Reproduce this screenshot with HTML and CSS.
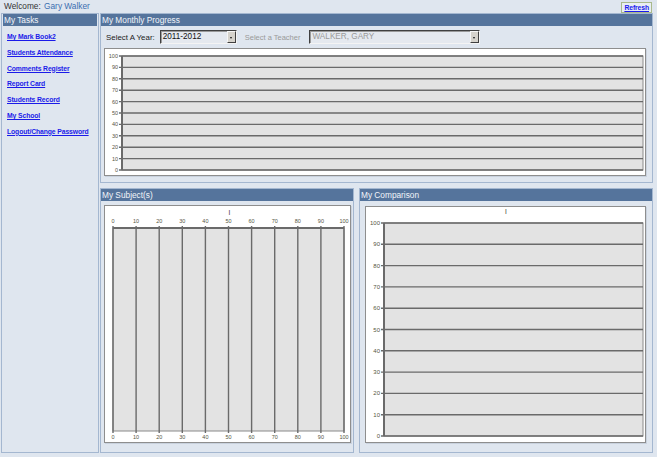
FILE: index.html
```html
<!DOCTYPE html>
<html>
<head>
<meta charset="utf-8">
<title>Dashboard</title>
<link rel="stylesheet" href="styles.css">
</head>
<body>
<div class="page">
  <div class="topbar">
    <div class="welcome">Welcome: <span class="user">Gary Walker</span></div>
    <a class="refresh" href="#">Refresh</a>
  </div>
  <div class="main">
    <div class="panel tasks">
      <div class="phead">My Tasks</div>
      <ul class="links">
        <li><a href="#">My Mark Book2</a></li>
        <li><a href="#">Students Attendance</a></li>
        <li><a href="#">Comments Register</a></li>
        <li><a href="#">Report Card</a></li>
        <li><a href="#">Students Record</a></li>
        <li><a href="#">My School</a></li>
        <li><a href="#">Logout/Change Password</a></li>
      </ul>
    </div>
    <div class="right">
      <div class="panel monthly">
        <div class="phead">My Monthly Progress</div>
        <div class="controls">
          <span class="lbl">Select A Year:</span>
          <div class="select year"><span class="val">2011-2012</span><span class="arrow"></span></div>
          <span class="lbl dim">Select a Teacher</span>
          <div class="select teacher"><span class="val">WALKER, GARY</span><span class="arrow"></span></div>
        </div>
        <div class="chartbox">
          <svg width="540" height="126" viewBox="0 0 540 126">
            <rect x="17" y="7" width="521" height="114" fill="#e3e3e3" stroke="#8a8a8a" stroke-width="1"/>
            <g stroke="#6a6a6a" stroke-width="1.4">
              <line x1="14" y1="7" x2="538" y2="7"/>
              <line x1="14" y1="18.4" x2="538" y2="18.4"/>
              <line x1="14" y1="29.8" x2="538" y2="29.8"/>
              <line x1="14" y1="41.2" x2="538" y2="41.2"/>
              <line x1="14" y1="52.6" x2="538" y2="52.6"/>
              <line x1="14" y1="64" x2="538" y2="64"/>
              <line x1="14" y1="75.4" x2="538" y2="75.4"/>
              <line x1="14" y1="86.8" x2="538" y2="86.8"/>
              <line x1="14" y1="98.2" x2="538" y2="98.2"/>
              <line x1="14" y1="109.6" x2="538" y2="109.6"/>
              <line x1="14" y1="121" x2="538" y2="121"/>
              <line x1="17" y1="7" x2="17" y2="121" stroke-width="2"/>
            </g>
            <g class="axis" text-anchor="end">
              <text x="13" y="9">100</text>
              <text x="13" y="20.4">90</text>
              <text x="13" y="31.8">80</text>
              <text x="13" y="43.2">70</text>
              <text x="13" y="54.6">60</text>
              <text x="13" y="66">50</text>
              <text x="13" y="77.4">40</text>
              <text x="13" y="88.8">30</text>
              <text x="13" y="100.2">20</text>
              <text x="13" y="111.6">10</text>
              <text x="13" y="123">0</text>
            </g>
          </svg>
        </div>
      </div>
      <div class="bottomrow">
        <div class="panel subject">
          <div class="phead">My Subject(s)</div>
          <div class="chartbox">
            <svg width="245" height="236" viewBox="0 0 245 236">
              <rect x="8" y="22" width="231" height="203" fill="#e3e3e3" stroke="#8a8a8a" stroke-width="1"/>
              <text class="axis tick" x="124.5" y="9" text-anchor="middle">I</text>
              <g stroke="#6a6a6a" stroke-width="1.4">
                <line x1="8" y1="20" x2="8" y2="227"/>
                <line x1="31.1" y1="20" x2="31.1" y2="227"/>
                <line x1="54.2" y1="20" x2="54.2" y2="227"/>
                <line x1="77.3" y1="20" x2="77.3" y2="227"/>
                <line x1="100.4" y1="20" x2="100.4" y2="227"/>
                <line x1="123.5" y1="20" x2="123.5" y2="227"/>
                <line x1="146.6" y1="20" x2="146.6" y2="227"/>
                <line x1="169.7" y1="20" x2="169.7" y2="227"/>
                <line x1="192.8" y1="20" x2="192.8" y2="227"/>
                <line x1="215.9" y1="20" x2="215.9" y2="227"/>
                <line x1="239" y1="20" x2="239" y2="227"/>
                <line x1="8" y1="22" x2="239" y2="22" stroke-width="2"/>
              </g>
              <g class="axis" text-anchor="middle">
                <text x="8" y="17">0</text><text x="31.1" y="17">10</text><text x="54.2" y="17">20</text>
                <text x="77.3" y="17">30</text><text x="100.4" y="17">40</text><text x="123.5" y="17">50</text>
                <text x="146.6" y="17">60</text><text x="169.7" y="17">70</text><text x="192.8" y="17">80</text>
                <text x="215.9" y="17">90</text><text x="239" y="17">100</text>
              </g>
              <g class="axis" text-anchor="middle">
                <text x="8" y="233">0</text><text x="31.1" y="233">10</text><text x="54.2" y="233">20</text>
                <text x="77.3" y="233">30</text><text x="100.4" y="233">40</text><text x="123.5" y="233">50</text>
                <text x="146.6" y="233">60</text><text x="169.7" y="233">70</text><text x="192.8" y="233">80</text>
                <text x="215.9" y="233">90</text><text x="239" y="233">100</text>
              </g>
            </svg>
          </div>
        </div>
        <div class="panel comparison">
          <div class="phead">My Comparison</div>
          <div class="chartbox">
            <svg width="279" height="235" viewBox="0 0 279 235">
              <rect x="18" y="16" width="259" height="213" fill="#e3e3e3" stroke="#8a8a8a" stroke-width="1"/>
              <text class="axis tick" x="140" y="7" text-anchor="middle">I</text>
              <g stroke="#6a6a6a" stroke-width="1.4">
                <line x1="15" y1="16" x2="277" y2="16"/>
                <line x1="15" y1="37.3" x2="277" y2="37.3"/>
                <line x1="15" y1="58.6" x2="277" y2="58.6"/>
                <line x1="15" y1="79.9" x2="277" y2="79.9"/>
                <line x1="15" y1="101.2" x2="277" y2="101.2"/>
                <line x1="15" y1="122.5" x2="277" y2="122.5"/>
                <line x1="15" y1="143.8" x2="277" y2="143.8"/>
                <line x1="15" y1="165.1" x2="277" y2="165.1"/>
                <line x1="15" y1="186.4" x2="277" y2="186.4"/>
                <line x1="15" y1="207.7" x2="277" y2="207.7"/>
                <line x1="15" y1="229" x2="277" y2="229"/>
                <line x1="18" y1="16" x2="18" y2="229" stroke-width="2"/>
              </g>
              <g class="axis big" text-anchor="end">
                <text x="14" y="18">100</text>
                <text x="14" y="39.3">90</text>
                <text x="14" y="60.6">80</text>
                <text x="14" y="81.9">70</text>
                <text x="14" y="103.2">60</text>
                <text x="14" y="124.5">50</text>
                <text x="14" y="145.8">40</text>
                <text x="14" y="167.1">30</text>
                <text x="14" y="188.4">20</text>
                <text x="14" y="209.7">10</text>
                <text x="14" y="231">0</text>
              </g>
            </svg>
          </div>
        </div>
      </div>
    </div>
  </div>
</div>
</body>
</html>
```
FILE: styles.css
```css
* { box-sizing: border-box; }
html, body { margin: 0; padding: 0; }
body {
  background: #dfe6ef;
  font-family: "Liberation Sans", Arial, sans-serif;
  font-size: 8.2px;
  color: #333;
}
.page { width: 657px; height: 457px; overflow: hidden; }
.topbar {
  height: 13px;
  display: flex;
  justify-content: space-between;
  align-items: center;
  padding: 0 5px 0 4px;
}
.welcome { font-size: 8.3px; color: #333; line-height: 13px; }
.user { color: #3b6eaf; margin-left: 1px; }
.refresh {
  height: 11px;
  margin-top: 1px;
  padding: 0 2px;
  border: 1px solid #a9b98c;
  background: #e9eef3;
  color: #1a1aef;
  font-weight: bold;
  font-size: 6.8px;
  line-height: 9px;
  letter-spacing: -0.1px;
  text-decoration: underline;
}
.main {
  display: flex;
  gap: 1px;
  padding: 0 4px 0 1px;
  height: 440px;
}
.panel {
  border: 1px solid #a4b7d0;
  background: #dfe6ef;
}
.phead {
  background: #55749c;
  color: #f2f5fa;
  height: 12px;
  line-height: 12px;
  padding-left: 1px;
  font-size: 8.3px;
  white-space: nowrap;
  overflow: hidden;
}
.tasks { width: 98px; height: 440px; }
.tasks .phead { margin: 0 1px; }
.links {
  list-style: none;
  margin: 0;
  padding: 7px 0 0 5px;
  display: flex;
  flex-direction: column;
  gap: 7px;
}
.links li { font-size: 6.8px; line-height: 8.8px; }
.links a {
  color: #1b1be9;
  font-weight: bold;
  font-size: 6.8px;
  letter-spacing: -0.1px;
  text-decoration: underline;
  white-space: nowrap;
}
.right {
  flex: 1;
  display: flex;
  flex-direction: column;
  gap: 5px;
}
.monthly { height: 170px; }
.controls {
  height: 21px;
  display: flex;
  align-items: center;
  padding-left: 5px;
  padding-top: 1px;
}
.lbl { color: #222; font-size: 7.9px; margin-right: 5px; white-space: nowrap; }
.lbl.dim { color: #9a9a9a; font-size: 7.5px; margin-left: 8px; margin-right: 9px; }
.select {
  height: 14px;
  display: flex;
  border-top: 1px solid #404040;
  border-left: 1px solid #404040;
  border-right: 1px solid #f4f4f4;
  border-bottom: 1px solid #f4f4f4;
  background: #e5e9ef;
  box-shadow: inset 1px 1px 0 #9a9a9a;
}
.select .val {
  flex: 1;
  font-size: 8.2px;
  line-height: 11px;
  padding-left: 2px;
  color: #111;
  white-space: nowrap;
}
.select .arrow {
  width: 9px;
  background: #d6d3cc;
  border-left: 1px solid #f6f6f6;
  border-top: 1px solid #f6f6f6;
  border-right: 1px solid #404040;
  border-bottom: 1px solid #404040;
  position: relative;
}
.select .arrow::after {
  content: "";
  position: absolute;
  left: 2px;
  top: 5px;
  border-left: 1.5px solid transparent;
  border-right: 1.5px solid transparent;
  border-top: 2px solid #111;
}
.select.year { width: 77px; }
.select.teacher { width: 171px; }
.select.teacher .val { color: #9a9a9a; }
.chartbox {
  background: #fff;
  border: 1px solid #8e8e8e;
  box-shadow: 1px 1px 0 #c9d2de;
  display: flex;
}
.chartbox svg { display: block; }
.monthly .chartbox { margin: 1px 0 0 3px; width: 542px; height: 128px; }
.bottomrow {
  flex: 1;
  display: flex;
  gap: 5px;
}
.subject { width: 254px; }
.subject .chartbox { margin: 4px 0 0 3px; width: 247px; height: 238px; }
.comparison { flex: 1; }
.comparison .chartbox { margin: 5px 0 0 5px; width: 281px; height: 237px; }
.axis, .axis text { font-family: "Liberation Sans", Arial, sans-serif; font-size: 5.5px; fill: #55553f; }
.axis.big text { font-size: 6px; }
.axis.tick { font-size: 6.5px; fill: #333; }
```
